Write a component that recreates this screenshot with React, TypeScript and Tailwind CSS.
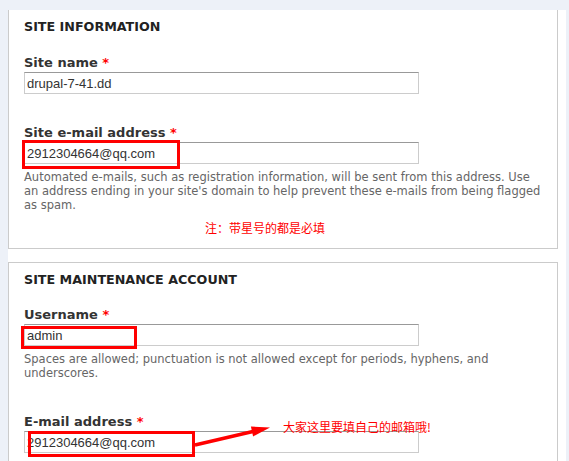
import React from "react";

const label = "font-['DejaVu_Sans',Verdana,sans-serif] text-[13px] leading-[14px] font-bold text-[#333]";
const heading = "font-['DejaVu_Sans',Verdana,sans-serif] text-[12.7px] leading-[14px] font-bold uppercase text-[#222]";
const desc = "font-['DejaVu_Sans',Verdana,sans-serif] text-[11.5px] leading-[14px] text-[#666]";
const note = "font-['Noto_Sans_CJK_SC',sans-serif] text-[12px] leading-[16px] text-[#ff0000]";

function Field({ value }: { value: string }) {
  return (
    <input
      readOnly
      value={value}
      className="block h-[22px] w-[395px] border border-[#ccc] border-t-[#999] bg-white pl-[2px] font-['Liberation_Sans',Arial,sans-serif] text-[13px] text-[#333] outline-none"
    />
  );
}

function Label({ text }: { text: string }) {
  return (
    <div className={label}>
      {text} <span className="text-[#ff0000]">*</span>
    </div>
  );
}

export default function App() {
  return (
    <div className="h-[461px] overflow-hidden bg-[#edf1f8] pt-[10px] pl-[8px]">
      <div className="w-[558px] bg-white">
        {/* site information */}
        <div className="w-[550px] border-x border-b border-[#cbcbcb] px-[15px] pt-[10px] pb-[12px]">
          <h2 className={heading}>Site information</h2>

          <div className="mt-[22px]">
            <Label text="Site name" />
            <div className="mt-[2px]">
              <Field value="drupal-7-41.dd" />
            </div>
          </div>

          <div className="mt-[32px]">
            <Label text="Site e-mail address" />
            <div className="relative mt-[2px]">
              <Field value="2912304664@qq.com" />
              <div className="absolute left-[-2px] top-[-2px] h-[29px] w-[158px] border-[3px] border-[#ff0000]" />
            </div>
            <p className={`${desc} mt-[6px] whitespace-nowrap`}>
              Automated e-mails, such as registration information, will be sent from this address. Use
              <br />
              an address ending in your site's domain to help prevent these e-mails from being flagged
              <br />
              as spam.
            </p>
          </div>

          <p className={`${note} mt-[8px] ml-[181px]`}>注：带星号的都是必填</p>
        </div>

        {/* site maintenance account */}
        <div className="mt-[13px] w-[550px] border border-[#cbcbcb] px-[15px] pt-[10px] pb-[20px]">
          <h2 className={heading}>Site maintenance account</h2>

          <div className="mt-[21px]">
            <Label text="Username" />
            <div className="relative mt-[2px]">
              <Field value="admin" />
              <div className="absolute left-[-3px] top-[2px] h-[23px] w-[116px] border-[3px] border-[#ff0000]" />
            </div>
            <p className={`${desc} mt-[6px] whitespace-nowrap`}>
              Spaces are allowed; punctuation is not allowed except for periods, hyphens, and
              <br />
              underscores.
            </p>
          </div>

          <div className="mt-[35px]">
            <Label text="E-mail address" />
            <div className="relative mt-[2px]">
              <Field value="2912304664@qq.com" />
              <div className="absolute left-[4px] top-0 h-[26px] w-[167px] border-[3px] border-[#ff0000]" />
              <svg className="absolute left-[165px] top-[-10px]" width="110" height="30" viewBox="0 0 110 30">
                <line x1="6" y1="24" x2="66" y2="10" stroke="#ff0000" strokeWidth="3.5" />
                <polygon points="81,6.5 64.1,15.4 61.9,5.6" fill="#ff0000" />
              </svg>
              <span className={`${note} absolute left-[259px] top-[-12px] whitespace-nowrap`}>
                大家这里要填自己的邮箱哦!
              </span>
            </div>
          </div>
        </div>
      </div>
    </div>
  );
}
